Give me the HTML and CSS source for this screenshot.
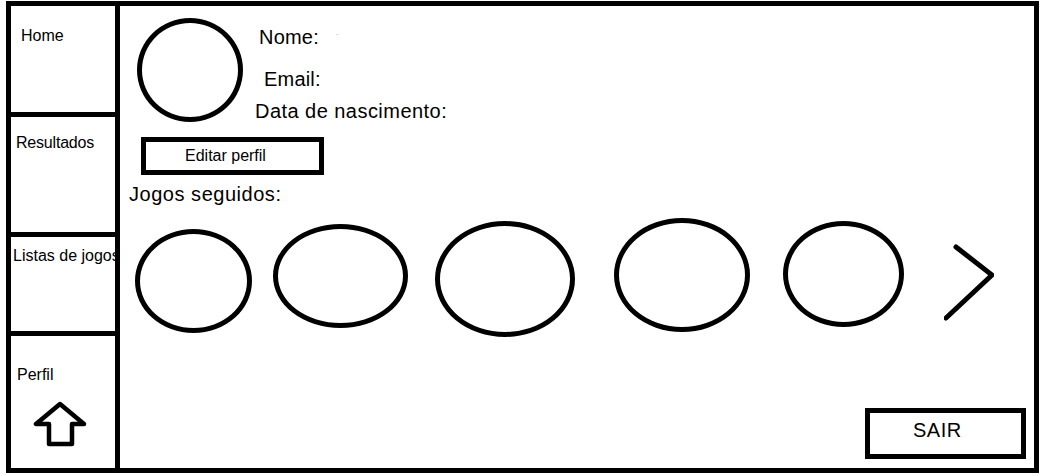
FILE: index.html
```html
<!DOCTYPE html>
<html lang="pt">
<head>
    <meta charset="UTF-8">
    <title>Perfil</title>
    <link rel="stylesheet" href="styles.css">
</head>
<body>
    <div class="frame">
        <div class="menu">
            <a class="menu-home" href="#">Home</a>
            <a class="menu-results" href="#">Resultados</a>
            <a class="menu-lists" href="#">Listas de jogos</a>
            <a class="menu-profile" href="#">
                Perfil
                <svg class="arrow" width="54" height="46" viewBox="0 0 54 46">
                    <polygon points="27,3 3,23 16,23 16,43 39,43 39,23 51,23"/>
                </svg>
            </a>
        </div>

        <div class="main">
            <div class="profile">
                <div class="avatar"></div>
                <div class="info">
                    <div class="info-name">Nome:<span class="speck"></span></div>
                    <div class="info-email">Email:</div>
                    <div class="info-birth">Data de nascimento:</div>
                </div>
            </div>

            <a class="edit" href="#">Editar perfil</a>

            <h2 class="games-title">Jogos seguidos:</h2>

            <div class="games">
                <div class="game game1"></div>
                <div class="game game2"></div>
                <div class="game game3"></div>
                <div class="game game4"></div>
                <div class="game game5"></div>
                <svg class="next" width="50" height="77" viewBox="0 0 50 77">
                    <polyline points="12,3 48,31 2,74"/>
                </svg>
            </div>

            <a class="exit" href="#">SAIR</a>
        </div>
    </div>
</body>
</html>
```

FILE: styles.css
```css
body{
    margin:0;
    background-color:#fff;
    color:#000;
    font-family:'Liberation Sans',Arial,sans-serif;
}

a{
    color:#000;
    text-decoration:none;
}

.frame{
    width:1033px;
    height:472px;
    margin:1px 0 0 6px;
    border:5px solid #000;
    box-sizing:border-box;
    display:flex;
}

/* menu on the left */
.menu{
    width:109px;
    border-right:5px solid #000;
    box-sizing:border-box;
    display:flex;
    flex-direction:column;
    flex-shrink:0;
}

.menu a{
    display:block;
    font-size:16px;
    line-height:18px;
    white-space:nowrap;
    box-sizing:border-box;
}

.menu-home{
    height:111px;
    padding:21px 0 0 10px;
    border-bottom:5px solid #000;
}

.menu-results{
    height:120px;
    padding:17px 0 0 5px;
    letter-spacing:-.2px;
    border-bottom:5px solid #000;
}

.menu-lists{
    height:99px;
    padding:10px 0 0 2px;
    border-bottom:5px solid #000;
}

.menu-profile{
    flex:1;
    padding:30px 0 0 6px;
}

.arrow{
    display:block;
    margin:17px 0 0 16px;
}

.arrow polygon{
    fill:none;
    stroke:#000;
    stroke-width:4.5;
    stroke-linejoin:round;
}

/* main area */
.main{
    flex:1;
    display:flex;
    flex-direction:column;
    align-items:flex-start;
}

.profile{
    display:flex;
    margin:12px 0 0 17px;
}

.avatar{
    width:106px;
    height:104px;
    border:5px solid #000;
    border-radius:50%;
    box-sizing:border-box;
}

.info{
    margin-left:12px;
    font-size:20px;
    line-height:24px;
}

.info-name{
    display:flex;
    margin:7px 0 0 4px;
    letter-spacing:.2px;
}

.speck{
    width:3px;
    height:1px;
    margin:9px 0 0 17px;
    background-color:#cfe4f5;
}

.info-email{
    margin:18px 0 0 9px;
    letter-spacing:.2px;
}

.info-birth{
    margin-top:8px;
    letter-spacing:.46px;
    white-space:nowrap;
}

.edit{
    width:183px;
    height:38px;
    margin:14px 0 0 21px;
    padding-left:39px;
    border:5px solid #000;
    box-sizing:border-box;
    font-size:16px;
    line-height:28px;
}

.games-title{
    margin:7px 0 0 9px;
    font-size:20px;
    font-weight:normal;
    letter-spacing:.53px;
    line-height:24px;
}

.games{
    display:flex;
    align-items:flex-start;
    margin:12px 0 0 15px;
}

.game{
    border:5px solid #000;
    border-radius:50%;
    box-sizing:border-box;
    flex-shrink:0;
}

.game1{
    width:117px;
    height:104px;
    margin-top:11px;
}

.game2{
    width:135px;
    height:104px;
    margin:6px 0 0 21px;
}

.game3{
    width:140px;
    height:116px;
    margin:3px 0 0 27px;
}

.game4{
    width:136px;
    height:114px;
    margin-left:39px;
}

.game5{
    width:121px;
    height:106px;
    margin:3px 0 0 33px;
}

.next{
    margin:26px 0 0 40px;
    flex-shrink:0;
}

.next polyline{
    fill:none;
    stroke:#000;
    stroke-width:5;
    stroke-linecap:round;
}

.exit{
    width:161px;
    height:51px;
    margin:auto 8px 9px 0;
    padding-left:43px;
    align-self:flex-end;
    border:5px solid #000;
    box-sizing:border-box;
    font-size:20px;
    letter-spacing:.5px;
    line-height:34px;
}
```
